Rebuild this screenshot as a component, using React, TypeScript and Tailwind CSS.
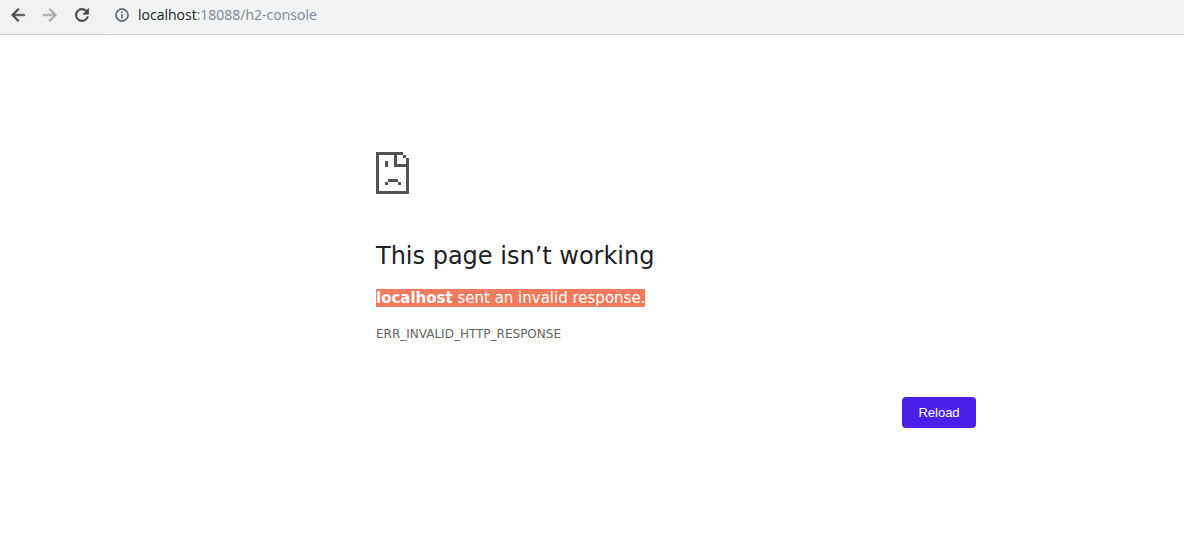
import { useState } from 'react';

// Drawn on a 33 x 42 grid, three units to a cell
const SadFileIcon = () => (
  <svg viewBox="0 0 33 42" className="h-[42px] w-[33px]" fill="#535353" shapeRendering="crispEdges" aria-hidden="true">
    <path d="M0 0h27v3h-6v9h12v3H18V3H3v36h27V15h3v27H0z" />
    <path d="M27 3h3v3h-3zM30 6h3v9h-3zM9 9h3v6H9zM12 27h10v3H12zM9 30h3v3H9zM22 30h3v3h-3z" />
  </svg>
);

const BackIcon = () => (
  <svg viewBox="0 0 24 24" className="size-5" fill="currentColor" stroke="currentColor" strokeWidth="0.6" aria-hidden="true">
    <path d="M20 11H7.83l5.59-5.59L12 4l-8 8 8 8 1.41-1.41L7.83 13H20v-2z" />
  </svg>
);

const ForwardIcon = () => (
  <svg viewBox="0 0 24 24" className="size-5" fill="currentColor" stroke="currentColor" strokeWidth="0.6" aria-hidden="true">
    <path d="M12 4l-1.41 1.41L16.17 11H4v2h12.17l-5.58 5.59L12 20l8-8z" />
  </svg>
);

const ReloadIcon = () => (
  <svg viewBox="0 0 24 24" className="size-5" fill="currentColor" stroke="currentColor" strokeWidth="0.7" aria-hidden="true">
    <path d="M17.65 6.35A7.96 7.96 0 0 0 12 4a8 8 0 1 0 7.73 10h-2.08A6 6 0 1 1 12 6c1.66 0 3.14.69 4.22 1.78L13 11h7V4l-2.35 2.35z" />
  </svg>
);

const InfoIcon = () => (
  <svg viewBox="0 0 24 24" className="size-4" fill="currentColor" stroke="currentColor" strokeWidth="0.5" aria-hidden="true">
    <path d="M11 7h2v2h-2zm0 4h2v6h-2zm1-9a10 10 0 1 0 0 20 10 10 0 0 0 0-20zm0 18a8 8 0 1 1 0-16 8 8 0 0 1 0 16z" />
  </svg>
);

const Toolbar = ({ onReload }: { onReload: () => void }) => (
  <header className="flex h-[35px] items-center border-b border-[#cfcfcf] bg-[#f2f1f0] pb-1 pl-2">
    <nav className="flex gap-3 text-[#454545]">
      <button type="button" aria-label="Back">
        <BackIcon />
      </button>
      <button type="button" aria-label="Forward" disabled className="text-[#a9a9a9]">
        <ForwardIcon />
      </button>
      <button type="button" aria-label="Reload page" onClick={onReload}>
        <ReloadIcon />
      </button>
    </nav>
    <div className="-mb-1 ml-4 flex h-[34px] flex-1 items-center gap-2 bg-[#f1f3f4] pb-1 pl-1.5 text-[#5f6368]">
      <button type="button" aria-label="View site information">
        <InfoIcon />
      </button>
      <a href="http://localhost:18088/h2-console" className="font-['Open_Sans',sans-serif] text-sm text-[#80868b]">
        <span className="text-[#202124]">localhost</span>:18088/h2-console
      </a>
    </div>
  </header>
);

const App = () => {
  const [attempt, setAttempt] = useState(0);

  const handleReload = () => setAttempt(attempt + 1);

  return (
    <div className="min-h-screen bg-white">
      <Toolbar onReload={handleReload} />
      <main
        key={attempt}
        className="mx-auto w-full max-w-[600px] pt-[117px] font-['DejaVu_Sans',sans-serif] text-[#646464] min-[1000px]:ml-[376px]"
      >
        <SadFileIcon />
        <h1 className="mt-12 text-2xl leading-7 text-[#202124]">This page isn’t working</h1>
        <p className="mt-4 text-[15px] leading-6">
          <span className="bg-[#ee7b5d] text-white">
            <strong>localhost</strong> sent an invalid response.
          </span>
        </p>
        <p className="mt-4 text-xs leading-4">ERR_INVALID_HTTP_RESPONSE</p>
        <div className="mt-[55px] flex justify-end">
          <button
            type="button"
            onClick={handleReload}
            className="h-[31px] w-[74px] rounded-sm bg-[#4a20e8] font-['Liberation_Sans',sans-serif] text-[13px] text-white"
          >
            Reload
          </button>
        </div>
      </main>
    </div>
  );
};

export default App;
